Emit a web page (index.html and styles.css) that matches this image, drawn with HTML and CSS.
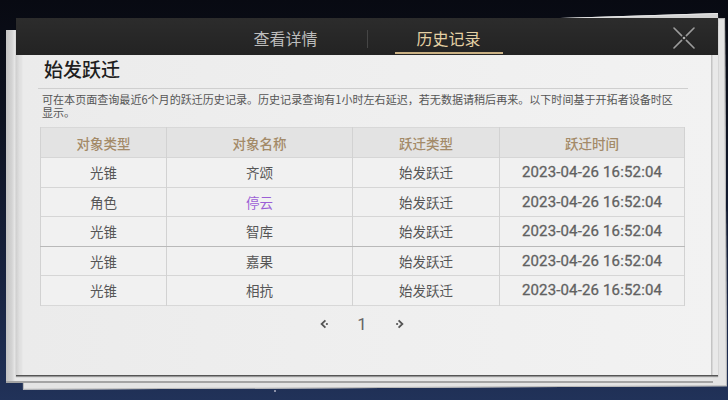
FILE: index.html
```html
<!DOCTYPE html>
<html>
<head>
  <meta charset="utf-8">
  <title>跃迁记录</title>
  <link rel="stylesheet" href="styles.css">
</head>
<body>
  <!-- paper sheets stacked behind the panel -->
  <div class="sheet sheet-back"></div>
  <div class="sheet sheet-edge"></div>
  <div class="sheet sheet-mid"></div>

  <div class="panel">
    <div class="panel-head">
      <div class="tabs">
        <div class="tab">查看详情</div>
        <div class="tab-sep"></div>
        <div class="tab active">历史记录</div>
      </div>
      <div class="close">
        <svg width="22" height="22" viewBox="0 0 22 22">
          <g stroke="#9c9c9c" stroke-width="1.6" stroke-linecap="round">
            <line x1="1" y1="1" x2="8.6" y2="8.6"/>
            <line x1="13.4" y1="13.4" x2="21" y2="21"/>
            <line x1="21" y1="1" x2="13.4" y2="8.6"/>
            <line x1="8.6" y1="13.4" x2="1" y2="21"/>
          </g>
          <circle cx="11" cy="11" r="1.3" fill="#b0b0b0"/>
        </svg>
      </div>
    </div>

    <div class="panel-body">
      <div class="title-row">
        <h1 class="title">始发跃迁</h1>
      </div>
      <p class="note">可在本页面查询最近6个月的跃迁历史记录。历史记录查询有1小时左右延迟，若无数据请稍后再来。以下时间基于开拓者设备时区显示。</p>

      <table class="records">
        <colgroup>
          <col class="c-type">
          <col class="c-name">
          <col class="c-kind">
          <col class="c-time">
        </colgroup>
        <thead>
          <tr>
            <th>对象类型</th>
            <th>对象名称</th>
            <th>跃迁类型</th>
            <th>跃迁时间</th>
          </tr>
        </thead>
        <tbody>
          <tr>
            <td>光锥</td>
            <td>齐颂</td>
            <td>始发跃迁</td>
            <td class="time">2023-04-26 16:52:04</td>
          </tr>
          <tr>
            <td>角色</td>
            <td class="rare">停云</td>
            <td>始发跃迁</td>
            <td class="time">2023-04-26 16:52:04</td>
          </tr>
          <tr class="group-end">
            <td>光锥</td>
            <td>智库</td>
            <td>始发跃迁</td>
            <td class="time">2023-04-26 16:52:04</td>
          </tr>
          <tr>
            <td>光锥</td>
            <td>嘉果</td>
            <td>始发跃迁</td>
            <td class="time">2023-04-26 16:52:04</td>
          </tr>
          <tr>
            <td>光锥</td>
            <td>相抗</td>
            <td>始发跃迁</td>
            <td class="time">2023-04-26 16:52:04</td>
          </tr>
        </tbody>
      </table>

      <div class="pager">
        <span class="pager-arrow">
          <svg width="10" height="10" viewBox="0 0 10 10">
            <path d="M5.4 1.3 L1.6 5 L5.4 8.7" fill="none" stroke="#555" stroke-width="1.8" stroke-linejoin="miter"/>
            <circle cx="6.9" cy="5" r="1.1" fill="#555"/>
          </svg>
        </span>
        <span class="pager-num">1</span>
        <span class="pager-arrow">
          <svg width="10" height="10" viewBox="0 0 10 10">
            <path d="M4.6 1.3 L8.4 5 L4.6 8.7" fill="none" stroke="#555" stroke-width="1.8" stroke-linejoin="miter"/>
            <circle cx="3.1" cy="5" r="1.1" fill="#555"/>
          </svg>
        </span>
      </div>
    </div>
  </div>
</body>
</html>
```

FILE: styles.css
```css
/* page and starry background */
html, body {
  width: 728px;
  height: 400px;
}
body {
  margin: 0;
  overflow: hidden;
  position: relative;
  font-family: "Noto Sans CJK SC", "Noto Sans", sans-serif;
  background:
    radial-gradient(circle at 275px 391px, #8a90a8 0, #8a90a8 1px, transparent 1.5px),
    radial-gradient(circle at 322px 373px, #5a6890 0, transparent 1.5px),
    linear-gradient(to bottom, #080a12 0%, #0d1220 30%, #17223f 70%, #213259 100%);
}

/* sheets behind the panel */
.sheet {
  position: absolute;
}
.sheet-back {
  left: 22px;
  top: 20px;
  width: 702px;
  height: 366px;
  background: #e4e4e4;
  border: 1px solid #b8b8b8;
  transform: rotate(-0.3deg);
}
.sheet-edge {
  left: 560px;
  top: 13px;
  width: 158px;
  height: 12px;
  background: #d2d2d2;
  border-top: 1px solid #e8e8e8;
  transform: rotate(-1.8deg);
  transform-origin: right top;
}
.sheet-mid {
  left: 6px;
  top: 30px;
  width: 707px;
  height: 351px;
  background: linear-gradient(to right, #c2c2c2 0, #d4d4d4 6px, #e8e8e8 9px, #e6e6e6 100%);
  border-bottom: 2px solid #a4a4a4;
}

/* main panel */
.panel {
  position: relative;
  margin: 18px 0 0 16px;
  width: 702px;
  height: 357px;
  display: flex;
  flex-direction: column;
  box-shadow: 0 1px 0 #555, 0 2px 1px rgba(0, 0, 0, 0.35);
}
.panel-head {
  flex: none;
  height: 37px;
  position: relative;
  display: flex;
  justify-content: center;
  background: linear-gradient(to bottom, #2c2c2c, #232323);
}
.tabs {
  display: flex;
  align-items: center;
  gap: 27px;
}
.tab {
  position: relative;
  width: 108px;
  height: 37px;
  box-sizing: border-box;
  padding-top: 3px;
  display: flex;
  align-items: center;
  justify-content: center;
  font-size: 16px;
  color: #bcbcbc;
}
.tab.active {
  color: #e4d0a4;
}
.tab.active::after {
  content: "";
  position: absolute;
  left: 0;
  right: 0;
  bottom: 1px;
  height: 2px;
  background: #cbb285;
}
.tab-sep {
  width: 1px;
  height: 18px;
  margin-top: 5px;
  background: #464646;
}
.close {
  position: absolute;
  right: 23px;
  top: 9px;
  width: 22px;
  height: 22px;
}

.panel-body {
  flex: 1;
  padding-left: 22px;
  background:
    linear-gradient(to right, transparent 0, transparent 695px, #c4c4c4 695px, #c4c4c4 696px, #e9e9e9 697px),
    linear-gradient(to right, #cfcfcf 0, #e2e2e2 4px, #e0e0e0 5px, #ebebeb 7px, #eeeeee 40%, #f2f2f2 100%);
}
.title-row {
  width: 644px;
  padding: 3px 0 8px 6px;
  border-bottom: 1px solid #cfcfcf;
}
.title {
  margin: 0;
  font-size: 19px;
  line-height: 22px;
  font-weight: 500;
  color: #1e1e1e;
}
.note {
  width: 636px;
  margin: 4px 0 0;
  padding-left: 4px;
  font-size: 11.05px;
  line-height: 13px;
  color: #555;
}

/* records table */
.records {
  margin: 8px 0 0 2px;
  width: 644px;
  table-layout: fixed;
  border-collapse: collapse;
  border: 1px solid #d8d8d8;
}
.c-type { width: 126px; }
.c-name { width: 186px; }
.c-kind { width: 147px; }
.c-time { width: 185px; }
.records th,
.records td {
  padding: 0;
  text-align: center;
  border-left: 1px solid #d2d2d2;
  border-right: 1px solid #d2d2d2;
}
.records th {
  height: 29px;
  font-size: 13.5px;
  font-weight: 500;
  color: #a38a68;
  background: #e3e3e3;
}
.records td {
  height: 28.5px;
  font-size: 13.5px;
  color: #565656;
  background: #f1f1f1;
  border-top: 1px solid #d6d6d6;
}
.records tr.group-end td {
  border-bottom: 1px solid #b9b9b9;
}
.records td.rare {
  color: #9c5fd6;
}
.records td.time {
  font-family: "Roboto", "Noto Sans", sans-serif;
  font-weight: 400;
  font-size: 15px;
  letter-spacing: 0.15px;
  color: #616161;
  -webkit-text-stroke: 0.3px #616161;
}

/* paging */
.pager {
  width: 644px;
  margin: 6px 0 0 2px;
  height: 24px;
  display: flex;
  align-items: center;
  justify-content: center;
  gap: 27px;
}
.pager-arrow {
  width: 10px;
  height: 10px;
  display: flex;
}
.pager-num {
  width: 10px;
  text-align: center;
  font-family: "Roboto", sans-serif;
  font-size: 17px;
  line-height: 24px;
  color: #666;
}
```
